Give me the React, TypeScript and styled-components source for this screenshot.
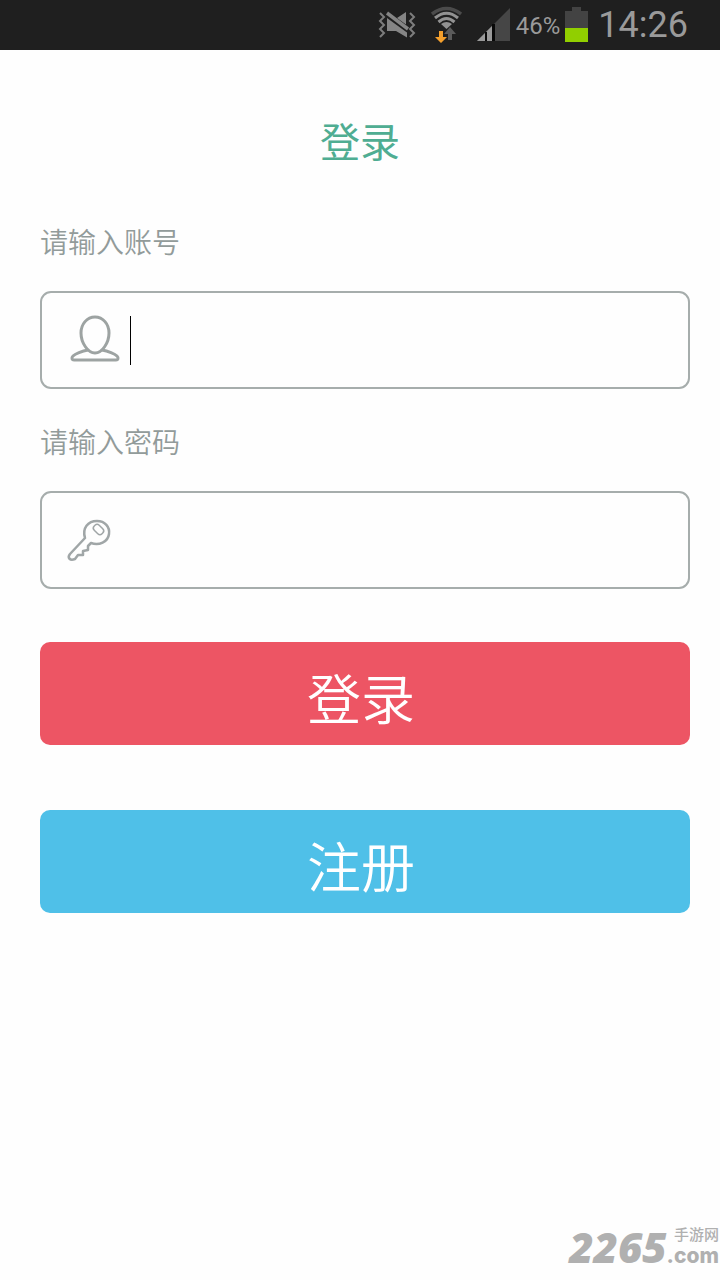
import React from 'react';
import styled, { createGlobalStyle } from 'styled-components';

const GlobalStyle = createGlobalStyle`
  * { box-sizing: border-box; }
  body {
    margin: 0;
    background: #fefefe;
    font-family: "Noto Sans CJK SC", sans-serif;
  }
`;

const Screen = styled.div`
  display: flex;
  flex-direction: column;
  min-height: 100vh;
`;

const StatusBar = styled.header`
  display: flex;
  align-items: center;
  justify-content: flex-end;
  height: 50px;
  padding-right: 32px;
  background: #1f1f1f;
  color: #9a9a9a;
  font-family: Roboto, sans-serif;
  svg { display: block; flex: none; }
`;

const StatusIcons = styled.div`
  display: flex;
  align-items: center;
  gap: 15px;
  margin-right: 6px;
`;

const BatteryLevel = styled.span`
  margin-right: 5px;
  padding-top: 2px;
  font-size: 24px;
  line-height: 48px;
`;

const Clock = styled.time`
  margin-left: 10px;
  font-size: 36px;
  line-height: 50px;
`;

const Title = styled.h1`
  margin: 60px 0 51px;
  color: #4fad92;
  font-size: 40px;
  font-weight: 400;
  line-height: 60px;
  text-align: center;
`;

const Form = styled.form`
  display: flex;
  flex-direction: column;
  padding: 0 30px 0 40px;
`;

const Field = styled.div`
  display: flex;
  flex-direction: column;
  gap: 30px;
  margin-bottom: 32px;
`;

const Label = styled.label`
  color: #929b9a;
  font-size: 28px;
  font-weight: 350;
  line-height: 40px;
`;

const InputBox = styled.div`
  display: flex;
  align-items: center;
  height: 98px;
  padding: 0 20px 0 26px;
  border: 2px solid #a6adac;
  border-radius: 11px;
  svg { display: block; flex: none; overflow: visible; }
`;

const Caret = styled.span`
  flex: none;
  width: 1px;
  height: 49px;
  margin-left: 8px;
  background: #000;
`;

const TextInput = styled.input`
  flex: 1;
  min-width: 0;
  height: 60px;
  padding: 0;
  border: 0;
  outline: 0;
  background: transparent;
  color: #333;
  font: inherit;
  font-size: 32px;
`;

const Actions = styled.div`
  display: flex;
  flex-direction: column;
  gap: 65px;
  padding-top: 21px;
`;

const ActionButton = styled.button<{ $color: string }>`
  height: 103px;
  padding: 6px 8px 0 0;
  border: 0;
  border-radius: 10px;
  background: ${(p) => p.$color};
  color: #fff;
  font-family: inherit;
  font-size: 54px;
  font-weight: 350;
  line-height: 80px;
  cursor: pointer;
`;

const Watermark = styled.footer`
  display: flex;
  align-items: flex-end;
  justify-content: flex-end;
  margin-top: auto;
  padding: 0 1px 13px 0;
  color: #b0b0b0;
`;

const BrandNumber = styled.span`
  font-family: "Open Sans", sans-serif;
  font-size: 42px;
  font-style: italic;
  font-weight: 800;
  line-height: 40px;
`;

const BrandSide = styled.span`
  display: flex;
  flex-direction: column;
  align-items: flex-end;
`;

const BrandName = styled.span`
  font-size: 15px;
  font-weight: 500;
  line-height: 22px;
`;

const BrandDomain = styled.span`
  font-family: Inter, sans-serif;
  font-size: 21px;
  font-weight: 800;
  line-height: 22px;
`;

const VibrateOffIcon = () => (
  <svg width="38" height="28" viewBox="0 0 38 28" fill="none" aria-hidden="true">
    <path d="M2 2l4 4-4 4 4 4-4 4 4 4-4 4" stroke="#7d7d7d" strokeWidth="2" />
    <path d="M32 2l4 4-4 4 4 4-4 4 4 4-4 4" stroke="#7d7d7d" strokeWidth="2" />
    <path d="M9 7l20 14.500v5L18 20H9zM19 7l9-6v12.500z" fill="#858585" />
    <path d="M9 2l21 16" stroke="#858585" strokeWidth="3.500" />
  </svg>
);

const WifiIcon = () => (
  <svg width="31" height="38" viewBox="0 0 31 38" fill="none" aria-hidden="true">
    <path d="M1 8Q15.500-3 30 8" stroke="#4b4b4b" strokeWidth="3.500" />
    <path d="M4 12Q15.500 2.500 27 12M7.500 16Q15.500 9 23.500 16" stroke="#929292" strokeWidth="3" />
    <path d="M10 18q5.500-4 11 0l-5.500 5z" fill="#929292" />
    <path d="M8 25h4v6h4l-6 6-6-6h4z" fill="#f5a02c" />
    <path d="M17 34h4v-6h4l-6-7-6 7h4z" fill="#5b5b5b" />
  </svg>
);

const SignalIcon = () => (
  <svg width="33" height="34" viewBox="0 0 33 34" aria-hidden="true">
    <path d="M0 33L33 0v33z" fill="#464646" />
    <path d="M0 33l17-17v17z" fill="#999" />
    <path d="M8 24h2v9H8zM15 16h3v17h-3z" fill="#080808" />
  </svg>
);

const BatteryIcon = () => (
  <svg width="23" height="36" viewBox="0 0 23 36" aria-hidden="true">
    <path d="M7 0h9v4h7v17H0V4h7z" fill="#434343" />
    <path d="M0 21h23v14H0z" fill="#91cf00" />
  </svg>
);

const UserIcon = () => (
  <svg width="54" height="54" viewBox="0 1 54 54" fill="none" stroke="#9da3a2" strokeWidth="3" strokeLinejoin="round" aria-hidden="true">
    <path d="M27 5c-8 0-14 7-14 16 0 10 7 20 14 20s14-10 14-20c0-9-6-16-14-16z" />
    <path d="M20 38c-6 1-13 4-15 6-2 2-1 4 1 4h42c2 0 3-2 1-4-2-2-9-5-15-6" />
  </svg>
);

const KeyIcon = () => (
  <svg width="46" height="46" viewBox="1 0 46 46" fill="none" stroke="#a0a6a7" strokeWidth="2.500" strokeLinejoin="round" aria-hidden="true">
    <path d="M18 21C15 11 21 4 30 4c8 0 13 6 12 13-1 8-10 12-18 9l-3 3v4l-5 1v4h-5l-3 4c-5 2-8-1-5-5z" />
    <rect x="26" y="9" width="11" height="7" rx="3" transform="rotate(45 31.500 12.500)" strokeWidth="1.500" />
  </svg>
);

export default function App() {
  return (
    <Screen>
      <GlobalStyle />
      <StatusBar>
        <StatusIcons>
          <VibrateOffIcon />
          <WifiIcon />
          <SignalIcon />
        </StatusIcons>
        <BatteryLevel>46%</BatteryLevel>
        <BatteryIcon />
        <Clock>14:26</Clock>
      </StatusBar>
      <Title>登录</Title>
      <Form onSubmit={(e) => e.preventDefault()}>
        <Field>
          <Label htmlFor="account">请输入账号</Label>
          <InputBox>
            <UserIcon />
            <Caret />
            <TextInput id="account" type="text" autoComplete="username" />
          </InputBox>
        </Field>
        <Field>
          <Label htmlFor="password">请输入密码</Label>
          <InputBox>
            <KeyIcon />
            <TextInput id="password" type="password" autoComplete="current-password" />
          </InputBox>
        </Field>
        <Actions>
          <ActionButton type="submit" $color="#ed5564">登录</ActionButton>
          <ActionButton type="button" $color="#4fc0e8">注册</ActionButton>
        </Actions>
      </Form>
      <Watermark>
        <BrandNumber>2265</BrandNumber>
        <BrandSide>
          <BrandName>手游网</BrandName>
          <BrandDomain>.com</BrandDomain>
        </BrandSide>
      </Watermark>
    </Screen>
  );
}
